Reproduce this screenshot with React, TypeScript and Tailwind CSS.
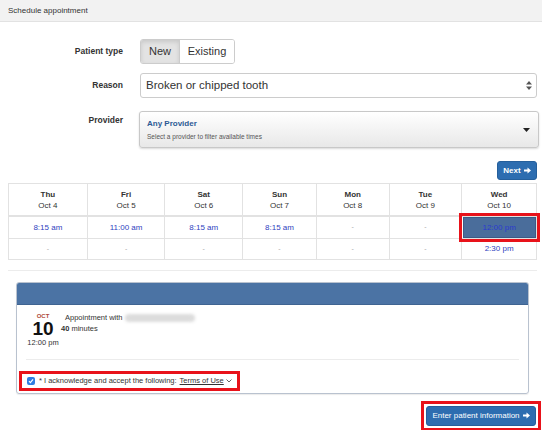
import React from "react";

type Day = { name: string; date: string; slots: string[] };

const days: Day[] = [
  { name: "Thu", date: "Oct 4", slots: ["8:15 am", "-"] },
  { name: "Fri", date: "Oct 5", slots: ["11:00 am", "-"] },
  { name: "Sat", date: "Oct 6", slots: ["8:15 am", "-"] },
  { name: "Sun", date: "Oct 7", slots: ["8:15 am", "-"] },
  { name: "Mon", date: "Oct 8", slots: ["-", "-"] },
  { name: "Tue", date: "Oct 9", slots: ["-", "-"] },
  { name: "Wed", date: "Oct 10", slots: ["12:00 pm", "2:30 pm"] },
];

const colWidths = ["w-[78px]", "w-[78px]", "w-[78px]", "w-[74px]", "w-[73px]", "w-[73px]", "w-[75px]"];

function Arrow() {
  return (
    <svg width="7" height="7" viewBox="0 0 10 10" className="inline-block ml-[3px] -mt-[1px]">
      <path d="M0 3.6h5V0.8L10 5 5 9.2V6.4H0z" fill="currentColor" />
    </svg>
  );
}

export default function App() {
  return (
    <div
      className="w-[542px] h-[430px] overflow-hidden bg-white text-[#333]"
      style={{ fontFamily: '"Liberation Sans", Arial, sans-serif' }}
    >
      {/* header */}
      <div className="h-[22px] bg-[#f2f2f2] border-b border-[#e2e2e2] px-[8px] flex items-center text-[8px] text-[#333]">
        Schedule appointment
      </div>

      {/* form */}
      <div className="mt-[17px] flex flex-col">
        <div className="flex items-center h-[25px]">
          <div className="w-[123px] text-right text-[8.5px] font-bold">Patient type</div>
          <div className="ml-[17px] flex h-[25px] rounded-[3px] border border-[#ccc] overflow-hidden text-[11px]">
            <div className="w-[39px] flex items-center justify-center bg-[#e3e3e3] shadow-[inset_0_2px_4px_rgba(0,0,0,0.12)] border-r border-[#ccc]">
              New
            </div>
            <div className="w-[54px] flex items-center justify-center bg-white">Existing</div>
          </div>
        </div>

        <div className="flex items-center h-[25px] mt-[9px]">
          <div className="w-[123px] text-right text-[8.5px] font-bold">Reason</div>
          <div className="ml-[17px] w-[397px] h-[25px] rounded-[3px] border border-[#ccc] flex items-center justify-between pl-[5px] pr-[4px] text-[11.5px]">
            <span>Broken or chipped tooth</span>
            <svg width="6" height="9" viewBox="0 0 6 9">
              <path d="M0 3.6L3 0 6 3.6z M0 5.4L3 9 6 5.4z" fill="#555" />
            </svg>
          </div>
        </div>

        <div className="flex items-start h-[37px] mt-[13px]">
          <div className="w-[123px] text-right text-[8.5px] font-bold pt-[3px]">Provider</div>
          <div className="ml-[16px] w-[400px] h-[37px] rounded-[3px] border border-[#c8c8c8] bg-gradient-to-b from-white to-[#e8e8e8] shadow-[0_1px_2px_rgba(0,0,0,0.15)] flex items-center justify-between pl-[7px] pr-[8px]">
            <div className="flex flex-col">
              <span className="text-[8px] font-bold text-[#2c5a94] leading-[10px]">Any Provider</span>
              <span className="text-[6.5px] text-[#555] mt-[4px] leading-[8px]">Select a provider to filter available times</span>
            </div>
            <svg width="7" height="4" viewBox="0 0 7 4">
              <path d="M0 0h7L3.5 4z" fill="#222" />
            </svg>
          </div>
        </div>

        <div className="flex justify-end pr-[5px] mt-[13px]">
          <button className="h-[19px] w-[40px] rounded-[3px] bg-[#2d6db0] border border-[#255f9b] text-white text-[8px] font-bold flex items-center justify-center">
            Next
            <Arrow />
          </button>
        </div>
      </div>

      {/* calendar */}
      <div className="ml-[8px] mt-[3px] w-[529px] border border-[#e2e2e2] flex">
        {days.map((d, i) => (
          <div key={d.name} className={`${colWidths[i]} flex flex-col ${i > 0 ? "border-l border-[#e2e2e2]" : ""}`}>
            <div className="h-[31px] flex flex-col items-center justify-center text-[8px] leading-[11px]">
              <span className="font-bold">{d.name}</span>
              <span>{d.date}</span>
            </div>
            <div className="h-[23px] border-t-2 border-[#e2e2e2] flex items-center justify-center">
              {d.slots[0] === "12:00 pm" ? (
                <div className="w-[73px] h-[21px] bg-[#4a6d9b] border border-[#3c5b85] flex items-center justify-center text-[8px] text-[#2a3bcf] outline-3 outline-[#e8121a] outline-offset-[1px]">
                  12:00 pm
                </div>
              ) : d.slots[0] === "-" ? (
                <span className="text-[7px] text-[#aaa]">-</span>
              ) : (
                <span className="text-[8px] text-[#2f3fc0]">{d.slots[0]}</span>
              )}
            </div>
            <div className="h-[21px] border-t border-[#e2e2e2] flex items-center justify-center">
              {d.slots[1] === "-" ? (
                <span className="text-[7px] text-[#aaa]">-</span>
              ) : (
                <span className="text-[8px] text-[#2f3fc0]">{d.slots[1]}</span>
              )}
            </div>
          </div>
        ))}
      </div>

      <div className="ml-[8px] mt-[10px] w-[529px] border-t border-[#ececec]" />

      {/* appointment panel */}
      <div className="ml-[16px] mt-[11px] w-[513px] h-[112px] border border-[#b9c2cf] rounded-[3px] overflow-hidden shadow-[0_1px_1px_rgba(0,0,0,0.08)]">
        <div className="h-[22px] bg-[#4b73a4] border-b border-[#3f6491]" />
        <div className="px-[8px]">
          <div className="flex pt-[7px] h-[54px]">
            <div className="w-[36px] flex flex-col items-center">
              <span className="text-[6px] font-bold text-[#b0473a] leading-[8px]">OCT</span>
              <span className="text-[19px] font-bold text-[#111] leading-[17px]">10</span>
              <span className="text-[7.5px] leading-[12px]">12:00 pm</span>
            </div>
            <div className="flex flex-col text-[7.5px] leading-[11px]">
              <div className="flex items-center ml-[4px]">
                <span>Appointment with</span>
                <span className="ml-[2px] inline-block w-[70px] h-[8px] rounded-full bg-[#dcdcdc] blur-[1.5px]" />
              </div>
              <div>
                <span className="font-bold">40</span> minutes
              </div>
            </div>
          </div>
          <div className="mx-[1px] border-t border-[#ececec]" />
          <div className="mt-[13px] -ml-[4px] inline-flex items-center h-[16px] pl-[6px] pr-[6px] outline-3 outline-[#e8121a] -outline-offset-[1px] text-[7.5px]">
            <span className="w-[8px] h-[8px] rounded-[2px] bg-[#2f7de1] flex items-center justify-center">
              <svg width="6" height="6" viewBox="0 0 6 6">
                <path d="M1 3.2L2.4 4.6 5 1.4" stroke="white" strokeWidth="1.2" fill="none" />
              </svg>
            </span>
            <span className="ml-[4px]">* I acknowledge and accept the following:</span>
            <span className="ml-[3px] underline text-[#333]">Terms of Use</span>
            <svg width="6" height="4" viewBox="0 0 6 4" className="ml-[2px]">
              <path d="M0.5 0.5L3 3 5.5 0.5" stroke="#555" strokeWidth="0.9" fill="none" />
            </svg>
          </div>
        </div>
      </div>

      <div className="flex justify-end pr-[1px] mt-[7px]">
        <div className="border-3 border-[#e8121a] p-[2px]">
          <button className="h-[20px] w-[110px] rounded-[3px] bg-[#2d6db0] border border-[#255f9b] text-white text-[8px] flex items-center justify-center">
            Enter patient information
            <Arrow />
          </button>
        </div>
      </div>
    </div>
  );
}
